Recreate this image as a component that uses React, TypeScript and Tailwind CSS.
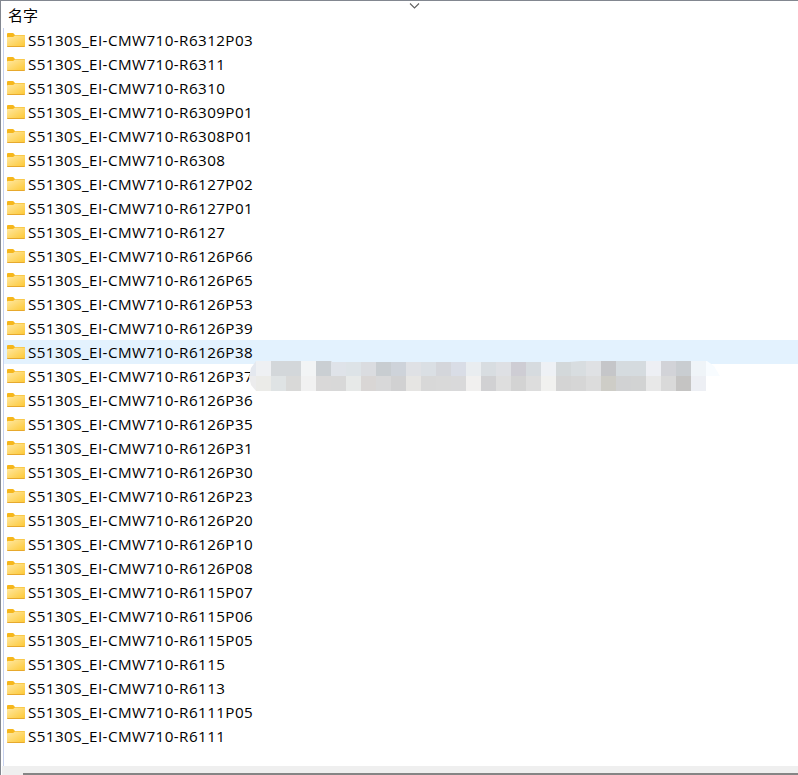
const folders = [
  'S5130S_EI-CMW710-R6312P03',
  'S5130S_EI-CMW710-R6311',
  'S5130S_EI-CMW710-R6310',
  'S5130S_EI-CMW710-R6309P01',
  'S5130S_EI-CMW710-R6308P01',
  'S5130S_EI-CMW710-R6308',
  'S5130S_EI-CMW710-R6127P02',
  'S5130S_EI-CMW710-R6127P01',
  'S5130S_EI-CMW710-R6127',
  'S5130S_EI-CMW710-R6126P66',
  'S5130S_EI-CMW710-R6126P65',
  'S5130S_EI-CMW710-R6126P53',
  'S5130S_EI-CMW710-R6126P39',
  'S5130S_EI-CMW710-R6126P38',
  'S5130S_EI-CMW710-R6126P37',
  'S5130S_EI-CMW710-R6126P36',
  'S5130S_EI-CMW710-R6126P35',
  'S5130S_EI-CMW710-R6126P31',
  'S5130S_EI-CMW710-R6126P30',
  'S5130S_EI-CMW710-R6126P23',
  'S5130S_EI-CMW710-R6126P20',
  'S5130S_EI-CMW710-R6126P10',
  'S5130S_EI-CMW710-R6126P08',
  'S5130S_EI-CMW710-R6115P07',
  'S5130S_EI-CMW710-R6115P06',
  'S5130S_EI-CMW710-R6115P05',
  'S5130S_EI-CMW710-R6115',
  'S5130S_EI-CMW710-R6113',
  'S5130S_EI-CMW710-R6111P05',
  'S5130S_EI-CMW710-R6111',
]

const hovered = 'S5130S_EI-CMW710-R6126P38'
const redacted = 'S5130S_EI-CMW710-R6126P37'

// [top, bottom] colour of each 15px mosaic column
const mosaic = [
  ['#e4e8ef', '#ececed'], ['#eef0f3', '#ebebe8'], ['#d3d7da', '#dfe3e4'], ['#d3d7da', '#d9d9d8'],
  ['#f2f4f5', '#f1f1f1'], ['#cacfd3', '#d9d8d8'], ['#dfe3e9', '#d8d8d8'], ['#dde3e7', '#e7e9e8'],
  ['#dadce0', '#d9d6d5'], ['#c8cdd1', '#d8d8d9'], ['#ced3da', '#d1d1d2'], ['#dfe1e5', '#e6e5e3'],
  ['#dadfe4', '#d8d8d8'], ['#d4d6db', '#d9d9d9'], ['#d9dde6', '#d9d9da'], ['#e9edf0', '#f1f0ef'],
  ['#d8dde1', '#d1d1d3'], ['#dee0e4', '#dedede'], ['#cecdd4', '#d3d3d3'], ['#d6dbdf', '#dddddd'],
  ['#eef1f5', '#f1f1ef'], ['#d3d8da', '#d4d4d4'], ['#d8dde0', '#d6d6d6'], ['#dfe1e4', '#dcdcdc'],
  ['#c5c6c9', '#cecdc7'], ['#d5dbdf', '#d1d2d3'], ['#d5dbdf', '#d2d3d3'], ['#edeff4', '#e8e8e8'],
  ['#d2d3d8', '#d9d9d9'], ['#c9cdd1', '#c5c4c3'], ['#eff4f8', '#edeff4'],
]

const FolderIcon = ({ id }: { id: string }) => (
  <svg width="18" height="14" viewBox="0 0 18 14" className="shrink-0">
    <defs>
      <linearGradient id={id} x1="0" y1="0" x2="1" y2="1">
        <stop offset="0" stopColor="#ffe9a5" />
        <stop offset="1" stopColor="#fdc938" />
      </linearGradient>
    </defs>
    <path d="M0 1Q0 0 1 0H5.6Q6.3 0 6.8 .6L7.9 2H17Q18 2 18 3V8H0Z" fill="#f6b71c" />
    <path d="M0 4.8Q0 4 .9 4H6.1L8 2.6H17.2Q18 2.6 18 3.4V13H0Z" fill={`url(#${id})`} />
    <path d="M0 13H18V13.2Q18 14 17.2 14H.8Q0 14 0 13.2Z" fill="#e7a92d" />
  </svg>
)

const Mosaic = () => (
  <div className="absolute -top-[3px] left-[237px] flex h-[30px] w-[480px] [clip-path:polygon(15px_0,91px_0,91px_1px,328px_1px,340px_0,466px_0,473px_5px,479px_15px,465px_15px,465px_30px,15px_30px,10px_24px,8px_16px,10px_7px)]">
    {mosaic.map(([top, bottom], index) => (
      <div key={index} className="w-[15px]">
        <div className="h-[15px]" style={{ backgroundColor: top }} />
        <div className="h-[15px]" style={{ backgroundColor: bottom }} />
      </div>
    ))}
    <div className="h-[15px] w-[15px] bg-[#f8fcff]" />
  </div>
)

const FolderRow = ({ name }: { name: string }) => (
  <li className={`relative flex h-6 items-center pl-[3px] ${name === hovered ? 'bg-[#e3f2fe]' : ''}`}>
    <FolderIcon id={`fill-${name}`} />
    <span className="ml-[3px] text-[15.2px] leading-6 tracking-[0.43px] whitespace-nowrap">{name}</span>
    {name === redacted && <Mosaic />}
  </li>
)

export default function App() {
  return (
    <div className="flex h-[775px] w-[798px] flex-col overflow-hidden border-t border-l border-[#828790] bg-white font-['Open_Sans','Noto_Sans_CJK_SC',sans-serif] text-black">
      <header className="relative h-[27px] shrink-0 pl-[7px]">
        <span className="block font-['Noto_Sans_CJK_SC',sans-serif] text-[15px] leading-[27px]">名字</span>
        <svg width="11" height="6" viewBox="0 0 11 6" className="absolute top-[2px] left-[408px]">
          <path d="M1 .5L5.5 5L10 .5" fill="none" stroke="#606060" strokeWidth="1.1" />
        </svg>
      </header>
      <div className="ml-[2px] h-[738px] shrink-0 border-l border-[#c8d2ee]">
        <ul className="-mr-px">
          {folders.map((name) => (
            <FolderRow key={name} name={name} />
          ))}
        </ul>
      </div>
      <footer className="ml-px flex h-[9px] shrink-0 flex-col justify-end bg-[#efefef] pl-[21px]">
        <div className="h-[2px] bg-[#858585]" />
      </footer>
    </div>
  )
}
